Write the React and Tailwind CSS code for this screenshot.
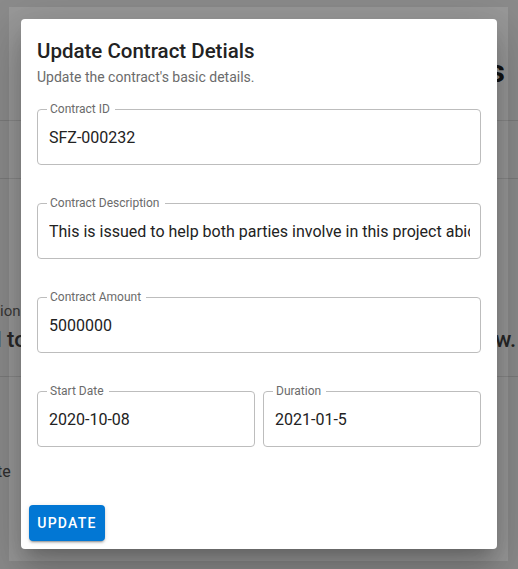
import React from 'react'

const FONT = { fontFamily: 'Roboto, "Liberation Sans", sans-serif' }

function Field({ label, value, className = '' }) {
  return (
    <div className={`relative h-[56px] rounded-[4px] border border-[#bdbdbd] ${className}`}>
      <span className="absolute left-[9px] top-[-7px] bg-white pl-[3px] pr-[5px] text-[12px] leading-[12px] text-[#6b6b6b]">
        {label}
      </span>
      <input
        readOnly
        value={value}
        className="h-full w-full rounded-[4px] bg-transparent pl-[11px] pr-[10px] text-[16px] text-[#222] outline-none"
      />
    </div>
  )
}

export default function App() {
  return (
    <div className="relative h-[569px] w-full overflow-hidden bg-white" style={FONT}>
      {/* page behind the dialog */}
      <div className="flex flex-col text-[#555]">
        <div className="h-[121px] border-b border-[#e3e3e3] pr-[13px] pt-[51px] text-right text-[32px] font-bold leading-[40px] text-[#222]">
          Contract Details
        </div>
        <div className="h-[58px] border-b border-[#e3e3e3]" />
        <div className="flex h-[198px] flex-col border-b border-[#e3e3e3] pt-[122px]">
          <div className="text-[15px] leading-[20px] text-[#666]">ion</div>
          <div className="flex justify-between pt-[4px] text-[22px] font-medium leading-[30px] text-[#444]">
            <span className="ml-[-4px]">l to</span>
            <span className="mr-[2px]">w.</span>
          </div>
        </div>
        <div className="pt-[84px] text-[16px] leading-[22px] text-[#555]">
          <span className="ml-[-3px]">te</span>
        </div>
      </div>

      {/* backdrop */}
      <div className="absolute inset-0 bg-black/40" />
      <div className="absolute inset-0 border-b-[8px] border-l-[9px] border-r-[10px] border-t-[7px] border-black/[0.09]" />

      {/* dialog */}
      <div className="absolute inset-0 flex items-start justify-center pt-[19px]">
        <div className="flex w-[476px] flex-col rounded-[4px] bg-white shadow-[0_11px_15px_-7px_rgba(0,0,0,0.2),0_24px_38px_3px_rgba(0,0,0,0.14),0_9px_46px_8px_rgba(0,0,0,0.12)]">
          <div className="px-4 pt-4">
            <h2 className="text-[20.5px] font-medium leading-[32px] text-[#222]">Update Contract Detials</h2>
            <p className="text-[14px] leading-[20px] text-[#6b6b6b]">Update the contract's basic details.</p>
          </div>
          <div className="flex flex-col gap-[38px] px-4 pb-[50px] pt-[22px]">
            <Field label="Contract ID" value="SFZ-000232" />
            <Field
              label="Contract Description"
              value="This is issued to help both parties involve in this project abide by the terms"
            />
            <Field label="Contract Amount" value="5000000" />
            <div className="grid grid-cols-2 gap-[8px]">
              <Field label="Start Date" value="2020-10-08" />
              <Field label="Duration" value="2021-01-5" />
            </div>
          </div>
          <div className="flex p-2">
            <button className="h-[36px] w-[76px] rounded-[4px] bg-[#0277d4] text-[14px] font-medium tracking-[0.09em] text-white shadow-[0_3px_1px_-2px_rgba(0,0,0,0.2),0_2px_2px_0_rgba(0,0,0,0.14),0_1px_5px_0_rgba(0,0,0,0.12)]">
              UPDATE
            </button>
          </div>
        </div>
      </div>
    </div>
  )
}
